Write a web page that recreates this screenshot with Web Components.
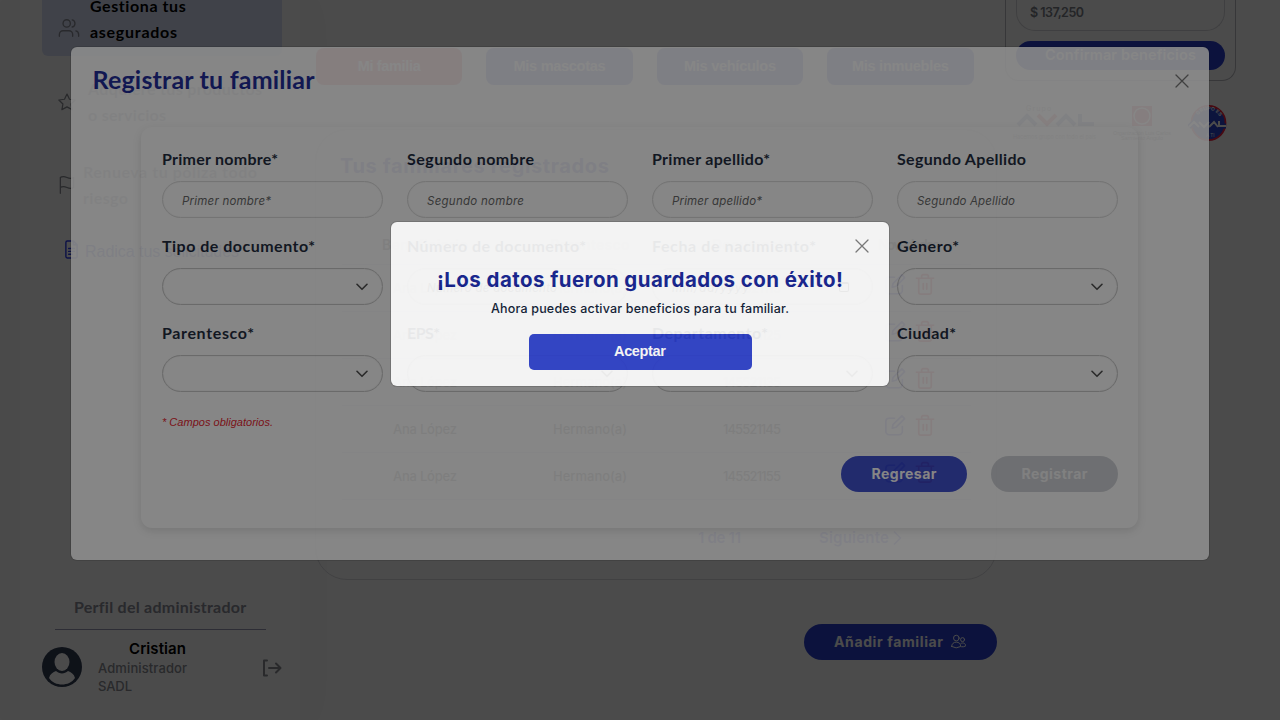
<!DOCTYPE html>
<html lang="es">
<head>
<meta charset="utf-8">
<title>Registrar familiar</title>
<style>
html,body{margin:0;width:1280px;height:720px;overflow:hidden;background:#fff}
</style>
</head>
<body>
<app-shell>
  <admin-page></admin-page>
  <form-modal slot="form"></form-modal>
  <success-modal slot="alert"></success-modal>
</app-shell>
<script>
const M = 'font-family:Inter,"Open Sans",sans-serif;';
const H = 'font-family:Lato,"Noto Sans",sans-serif;';
const L = 'font-family:"Liberation Sans",Arial,sans-serif;';
const define = (name, html, after) => customElements.define(name, class extends HTMLElement {
  connectedCallback() {
    if (this.shadowRoot) return;
    const root = this.attachShadow({mode: 'open'});
    root.innerHTML = '<style>*{box-sizing:border-box}</style>' + (typeof html === 'function' ? html(this) : html);
    if (after) after(this);
  }
});

/* Single line of text tracked to a given width (w, in px). */
define('fit-text', '<style>:host{display:inline-block;white-space:pre;flex:none}</style><slot></slot>', el => {
  queueMicrotask(() => {
    const w = +el.getAttribute('w'), n = el.textContent.length;
    if (!w) return;
    const ls = (w - el.getBoundingClientRect().width) / (n - 1);
    el.style.letterSpacing = ls + 'px';
    el.style.marginRight = -ls + 'px';
  });
});

const ICONS = {
  users: ['0 0 24 24', '<path d="M16 21v-2a4 4 0 0 0-4-4H5.500a4 4 0 0 0-4 4v2M22.500 21v-2a4 4 0 0 0-3-3.870M15.500 3.130a4 4 0 0 1 0 7.750"/><circle cx="9.500" cy="7" r="4"/>'],
  star: ['0 0 24 24', '<path d="M12 2.500l3 6.200 6.800.9-4.900 4.800 1.200 6.800-6.100-3.300-6.100 3.300 1.200-6.800L2.200 9.600 9 8.700z"/>'],
  flag: ['0 0 20 24', '<path d="M2 15s1-1 4-1 5 2 8 2 4-1 4-1V3s-1 1-4 1-5-2-8-2-4 1-4 1zM2 22V3"/>'],
  doc: ['0 0 16 20', '<path d="M10 1H3.500A1.500 1.500 0 0 0 2 2.500v15A1.500 1.500 0 0 0 3.500 19h9a1.500 1.500 0 0 0 1.500-1.500V5zM10 1v4h4M5 9h6M5 12h6M5 15h4"/>'],
  logout: ['0 0 20 18', '<path d="M5 1.500H2v15h3M7 9h11M14 4.500L18.500 9 14 13.500"/>'],
  edit: ['0 0 24 24', '<path d="M11.500 4H5.500A3.500 3.500 0 0 0 2 7.500v11A3.500 3.500 0 0 0 5.500 22h11a3.500 3.500 0 0 0 3.500-3.500V13M9 15l.8-4L19.500 1.500l3 3L13 14z"/>'],
  trash: ['0 0 20 24', '<path d="M1 5.500h18M3.500 5.500V20a2 2 0 0 0 2 2h9a2 2 0 0 0 2-2V5.500M6.500 5.500V3.500A1.800 1.800 0 0 1 8.300 1.700h3.400a1.800 1.800 0 0 1 1.800 1.800v2M8.200 11v6M11.800 11v6"/>'],
  close: ['0 0 14 14', '<path d="M1 1l12 12M13 1L1 13"/>'],
  down: ['0 0 12 8', '<path d="M1 1.300l5 5 5-5"/>'],
  right: ['0 0 9 14', '<path d="M1.500 1l6 6-6 6"/>'],
  pair: ['0 0 24 24', '<circle cx="8.500" cy="6.500" r="4.500"/><circle cx="18.500" cy="9" r="3.200"/><path d="M1 20c0-4.500 3.500-7 7.500-7s7 2.500 7 7q-7 4.500-14.500 0zM16 15c4-2 7.500.5 7.500 4q-3 2-6.500 1.500"/>']
};
define('ui-icon', el => {
  const [box, d] = ICONS[el.getAttribute('name')];
  return `<style>:host{display:block;flex:none;width:${el.getAttribute('w')}px;height:${el.getAttribute('h')}px}svg{display:block;width:100%;height:100%}</style>
  <svg viewBox="${box}" fill="none" stroke="currentColor" stroke-width="${el.getAttribute('s') || 1.5}" stroke-linecap="round" stroke-linejoin="round">${d}</svg>`;
});

define('side-bar', `<style>
:host{display:flex;flex-direction:column;width:280px;height:720px;margin-left:20px;padding:0 18px 0 22px;background:#fff;box-shadow:0 0 40px rgba(0,0,0,.04);${H}font-size:16px;font-weight:700;line-height:26px;color:#8b8e95}
.active{height:56px;display:flex;align-items:center;padding:0 0 18px 16px;gap:10px;background:#dbe2fa;border-radius:0 0 6px 6px;color:#000}
.active ui-icon{color:#8b8e98;margin-top:18px}
.active div{margin:-1px 0 0 0}
div>fit-text{display:block;width:max-content}
.row{display:flex;align-items:center;padding-left:15px;gap:9px}
.row.active{gap:10px;padding-left:16px}
.a{height:52px;margin-top:20px;gap:11px}.b{height:52px;margin-top:31px;gap:6px}.c{height:26px;margin-top:28px;padding-left:22px;gap:6px;${L}font-size:16px;font-weight:400;color:#3547c6}
.c ui-icon{color:#2b3bf0;margin-top:-6px}
.p{margin:329px 0 0 32px;height:26px;color:#8b8e98}
hr{width:211px;height:1px;border:0;background:#9a9bb5;margin:9px 0 10px 13px}
.me{display:flex;${M}font-size:13px;line-height:18px;font-weight:500}
.me svg{width:40px;height:40px;margin-top:7px;flex:none}
.n{margin-left:16px;width:165px}.n b{display:block;font-size:15px;font-weight:600;color:#000;padding-left:31px;height:19px;line-height:18px}
.me ui-icon{margin-top:19px}
</style>
<div class="row active"><ui-icon name="users" w="22" h="22"></ui-icon><div><fit-text w="96">Gestiona tus</fit-text><fit-text w="87">asegurados</fit-text></div></div>
<div class="row a"><ui-icon name="star" w="20" h="20"></ui-icon><div><fit-text w="174">Adquiere tus productos</fit-text><fit-text w="78">o servicios</fit-text></div></div>
<div class="row b"><ui-icon name="flag" w="20" h="20"></ui-icon><div><fit-text w="174">Renueva tu póliza todo</fit-text><fit-text w="45">riesgo</fit-text></div></div>
<div class="row c"><ui-icon name="doc" w="15" h="19"></ui-icon><fit-text w="154">Radica tus solicitudes</fit-text></div>
<div class="p"><fit-text w="172">Perfil del administrador</fit-text></div><hr>
<div class="me"><svg viewBox="0 0 40 40"><circle cx="20" cy="20" r="20" fill="#323d55"/><ellipse cx="20" cy="15" rx="7.500" ry="9" fill="#fff"/><path d="M7 31c1-4 4-6 7-7 3.500 3.300 8.500 3.300 12 0 3 1 6 3 7 7-3 4.500-8 6.500-13 6.500S10 35.500 7 31z" fill="#fff"/></svg>
<div class="n"><b><fit-text w="57">Cristian</fit-text></b><fit-text w="89">Administrador</fit-text><fit-text w="34">SADL</fit-text></div><ui-icon name="logout" w="20" h="18" s="2"></ui-icon></div>`);

define('table-row', el => `<style>:host{display:grid;grid-template-columns:166px 164px 160px 140px;align-items:center;justify-items:center;height:47px;border-bottom:1px solid #d8d8de;${M}font-size:13px;font-weight:500;color:#333}
.i{display:flex;gap:9px;color:#3c40f0;padding-left:14px;margin-top:-8px}.i ui-icon+ui-icon{color:#f01828}</style>
<fit-text w="64">Ana López</fit-text><fit-text w="74">Hermano(a)</fit-text><fit-text w="58">${el.getAttribute('doc')}</fit-text><div class="i"><ui-icon name="edit" w="22" h="23" s="1.700"></ui-icon><ui-icon name="trash" w="20" h="23" s="1.700"></ui-icon></div>`);

define('family-list', `<style>
:host{display:flex;flex-direction:column;width:682px;margin-left:15px;${M}}
.tabs{display:grid;grid-template-columns:repeat(4,146.400px);gap:24px;margin:48px 0 44px 1px}
.tabs div{height:37px;border-radius:8px;background:#3547d8;color:#fff;${L}font-size:14.500px;font-weight:700;line-height:37px;text-align:center}
.tabs div:first-child{background:#f02c3a}
.card{height:451px;border:1px solid #dedee3;border-radius:32px;padding:23px 25px 0 26px}
h2{margin:0 0 44px -2px;height:28px;line-height:26px;font-size:20px;font-weight:700;color:#4048d0}
.h{display:grid;grid-template-columns:166px 164px 160px 140px;justify-items:center;height:40px;line-height:40px;font-size:14px;font-weight:600;color:#444;border-bottom:1px solid #d8d8de}
.h fit-text:last-child{padding-left:14px}
.pg{display:flex;color:#4c50e8;font-size:15px;font-weight:600;line-height:20px;padding:28px 0 0 356px;align-items:center}
.pg ui-icon{margin-left:4px}.pg .s{margin-left:78px}
.add{align-self:flex-end;width:193px;height:36px;border-radius:18px;margin:44px 0 0;background:#2b3fcf;color:#fff;display:flex;align-items:center;font-size:14px;font-weight:700;padding:0 0 1px 30px;gap:8px}
</style>
<div class="tabs"><div><fit-text w="63">Mi familia</fit-text></div><div><fit-text w="92">Mis mascotas</fit-text></div><div><fit-text w="92">Mis vehículos</fit-text></div><div><fit-text w="97">Mis inmuebles</fit-text></div></div>
<div class="card"><h2><fit-text w="269">Tus familiares registrados</fit-text></h2>
<div class="h"><fit-text w="86">Beneficiario</fit-text><fit-text w="79">Parentesco</fit-text><fit-text w="80">Documento</fit-text><fit-text w="76">Novedades</fit-text></div>
<table-row doc="145521115"></table-row><table-row doc="145521125"></table-row><table-row doc="145521135"></table-row><table-row doc="145521145"></table-row><table-row doc="145521155"></table-row>
<div class="pg"><fit-text w="43">1 de 11</fit-text><fit-text class="s" w="70">Siguiente</fit-text><ui-icon name="right" w="9" h="14"></ui-icon></div></div>
<div class="add"><fit-text w="109">Añadir familiar</fit-text><ui-icon name="pair" w="15" h="15" s="1.600"></ui-icon></div>`);

define('benefit-panel', `<style>
:host{display:block;width:240px;margin-left:8px;${M}}
.p{width:231px;height:81px;border:1px solid #bcbcc2;border-top:0;border-radius:0 0 14px 14px;padding:0 10px}
.in{height:31px;border:1px solid #d8d8dd;border-top:0;border-radius:0 0 19px 19px;padding-left:13px;line-height:26px;font-size:12.500px;font-weight:600;color:#7c8088}
.b{height:29px;border-radius:15px;margin-top:10px;background:#2b3fcf;color:#fff;font-size:14.500px;font-weight:600;line-height:28px;text-align:center}
.l{display:flex;align-items:flex-start;margin:23px 0 0 4px}.l svg{flex:none;display:block}
</style>
<div class="p"><div class="in"><fit-text w="54">$ 137,250</fit-text></div><div class="b"><fit-text w="151">Confirmar beneficios</fit-text></div></div>
<div class="l">
<svg width="98" height="40" viewBox="0 0 98 40" fill="none" stroke-width="4"><text x="17" y="7" font-family="Inter" font-size="7" letter-spacing="1.200" fill="#777">Grupo</text><path d="M9 21l9-9 9 9M48 21l9-9 9 9M71 10v10h14" stroke="#6878b0"/><path d="M29 11l9 9 9-9" stroke="#f04a55"/><text x="4" y="35" font-family="Inter" font-size="5.500" textLength="83" fill="#777">Hacemos grupo con todo el país</text></svg>
<svg width="78" height="40" viewBox="0 0 78 40"><rect x="25" y="2" width="20" height="20" fill="#ee3040"/><circle cx="35" cy="12" r="8" fill="none" stroke="#fff" stroke-width="1.500"/><text x="6" y="31" font-family="Liberation Sans" font-size="5.500" textLength="58" fill="#555">Organización Luis Carlos</text><text x="14" y="36" font-family="Liberation Sans" font-size="5.500" textLength="42" fill="#555">Sarmiento Angulo</text></svg>
<svg width="42" height="38" viewBox="0 0 42 38" style="margin-left:3px"><circle cx="20.500" cy="19" r="17" fill="#2b45d0" stroke="#f02040" stroke-width="1.800"/><path id="arc" d="M8.500 17a12 11 0 0 1 24 0" fill="none"/><text font-family="Inter" font-size="5" font-weight="700" fill="#fff"><textPath href="#arc" startOffset="6">GRUPO ES</textPath></text><path d="M1 23l5-5 5 5M11 18l5 5 5-5M21 23l5-5 4 5M31 17v5h7" stroke="#2b45d0" stroke-width="5" fill="none"/><path d="M1 23l5-5 5 5M11 18l5 5 5-5M21 23l5-5 4 5M31 17v5h7" stroke="#fff" stroke-width="2" fill="none"/><text x="18" y="33" font-family="Inter" font-size="4.500" fill="#fff">A TI</text></svg>
</div>`);

define('admin-page', `<style>:host{display:flex;width:1280px;height:720px;overflow:hidden;background:#fff}</style><side-bar></side-bar><family-list></family-list><benefit-panel></benefit-panel>`);

define('form-field', el => {
  const ph = el.getAttribute('ph'), sel = el.hasAttribute('select'), date = el.hasAttribute('date');
  return `<style>
:host{display:block;width:221px;height:87px}
.l{height:22px;line-height:22px;${H}font-size:16px;font-weight:700;color:#121c33}
.f{height:37px;margin-top:11.500px;border:1px solid ${sel ? '#c6c6c6' : '#dadada'};box-shadow:inset 0 0 1px ${sel ? '#c2c2c2' : '#d8d8d8'};border-radius:19px;padding:1px 16px 0 19px;display:flex;align-items:center;justify-content:space-between;font:italic 400 11.500px Inter,sans-serif;color:#606060}
.f fit-text{margin-top:1px}
.f ui-icon{color:#444;margin-left:auto}
.cal{width:10px;height:10px;border:1px solid #222;border-radius:2px;border-top-width:2px;margin-right:7px}
</style><div class="l"><fit-text w="${el.getAttribute('lw')}">${el.getAttribute('label')}</fit-text></div>
<div class="f">${ph ? `<fit-text w="${el.getAttribute('pw')}">${ph}</fit-text>` : ''}${sel ? '<ui-icon name="down" w="12" h="8" s="1.600" style="margin-right:-2px"></ui-icon>' : ''}${date ? '<span class="cal"></span>' : ''}</div>`;
});

define('form-modal', `<style>
:host{display:block;width:1138px;height:513.500px;background:#fff;border-radius:6px;box-shadow:0 0 0 1px rgba(0,0,0,.12)}
header{display:flex;justify-content:space-between;align-items:center;height:68px;padding:0 20px 0 21.500px}
h1{margin:-4px 0 0;${H}font-size:25px;font-weight:700;color:#121e96;line-height:32px}
header ui-icon{color:#707070}
.c{width:997px;height:401px;margin:12px 0 0 70px;border-radius:11px;box-shadow:0 3px 9px rgba(0,0,0,.13);padding:21px 20px 0 21px}
.g{display:grid;grid-template-columns:repeat(4,221px);column-gap:24px}
.o{${L}font-size:11px;font-style:italic;color:#e8101c;line-height:16px;margin-top:5px}
.b{display:flex;justify-content:flex-end;gap:24px;margin-top:26.500px;${M}font-size:14px;font-weight:700;text-align:center;line-height:35px;color:#fff}
.b div{width:127px;height:36px;border-radius:18px;background:#3345cb}.b div+div{background:#cfd1d6}
.b div:first-child{width:126px}
.b div+div fit-text{opacity:.75}
</style>
<header><h1><fit-text w="222">Registrar tu familiar</fit-text></h1><ui-icon name="close" w="14" h="14" s="1.300"></ui-icon></header>
<div class="c"><div class="g">
<form-field label="Primer nombre*" lw="116" ph="Primer nombre*" pw="89"></form-field>
<form-field label="Segundo nombre" lw="127" ph="Segundo nombre" pw="97"></form-field>
<form-field label="Primer apellido*" lw="118" ph="Primer apellido*" pw="90"></form-field>
<form-field label="Segundo Apellido" lw="129" ph="Segundo Apellido" pw="98"></form-field>
<form-field label="Tipo de documento*" lw="153" select></form-field>
<form-field label="Número de documento*" lw="179" ph="Número de documento" pw="130"></form-field>
<form-field label="Fecha de nacimiento*" lw="164" ph="mm/dd/yyyy" pw="77" date></form-field>
<form-field label="Género*" lw="62" select></form-field>
<form-field label="Parentesco*" lw="92" select></form-field>
<form-field label="EPS*" lw="33" select></form-field>
<form-field label="Departamento*" lw="116" select></form-field>
<form-field label="Ciudad*" lw="59" select></form-field>
</div><div class="o"><fit-text w="111">* Campos obligatorios.</fit-text></div>
<div class="b"><div><fit-text w="65">Regresar</fit-text></div><div><fit-text w="66">Registrar</fit-text></div></div></div>`);

define('success-modal', `<style>
:host{display:flex;flex-direction:column;align-items:center;width:498px;height:164.500px;background:#fff;border-radius:6px;${M}box-shadow:0 0 0 1px rgba(0,0,0,.15)}
ui-icon{align-self:flex-end;margin:17.500px 20px 0 0;color:#777}
h2{margin:13px 0 0;font-size:20.500px;font-weight:700;line-height:28px;color:#0f1c8e}
p{margin:5px 0 0;font-size:12.500px;line-height:20px;font-weight:500;color:#0a1530}
.b{width:223px;height:36px;border-radius:5px;margin-top:15px;background:#2b3eca;color:#fff;text-align:center;${L}font-size:14.500px;font-weight:700;line-height:35px}
</style><ui-icon name="close" w="14" h="14" s="1.300"></ui-icon>
<h2><fit-text w="406">¡Los datos fueron guardados con éxito!</fit-text></h2>
<p><fit-text w="298">Ahora puedes activar beneficios para tu familiar.</fit-text></p>
<div class="b"><fit-text w="52">Aceptar</fit-text></div>`);

define('app-shell', `<style>
:host{display:block;position:relative;width:1280px;height:720px;overflow:hidden}
.o{position:absolute;inset:0;background:rgba(0,0,0,.475)}
.f+.o{background:rgba(0,0,0,.44)}
.f,.a{position:absolute;left:71px;top:46.500px;opacity:.87}
.a{left:391px;top:221.500px;opacity:.9}
</style><slot></slot><div class="o"></div><div class="f"><slot name="form"></slot></div><div class="o"></div><div class="a"><slot name="alert"></slot></div>`);
</script>
</body>
</html>
